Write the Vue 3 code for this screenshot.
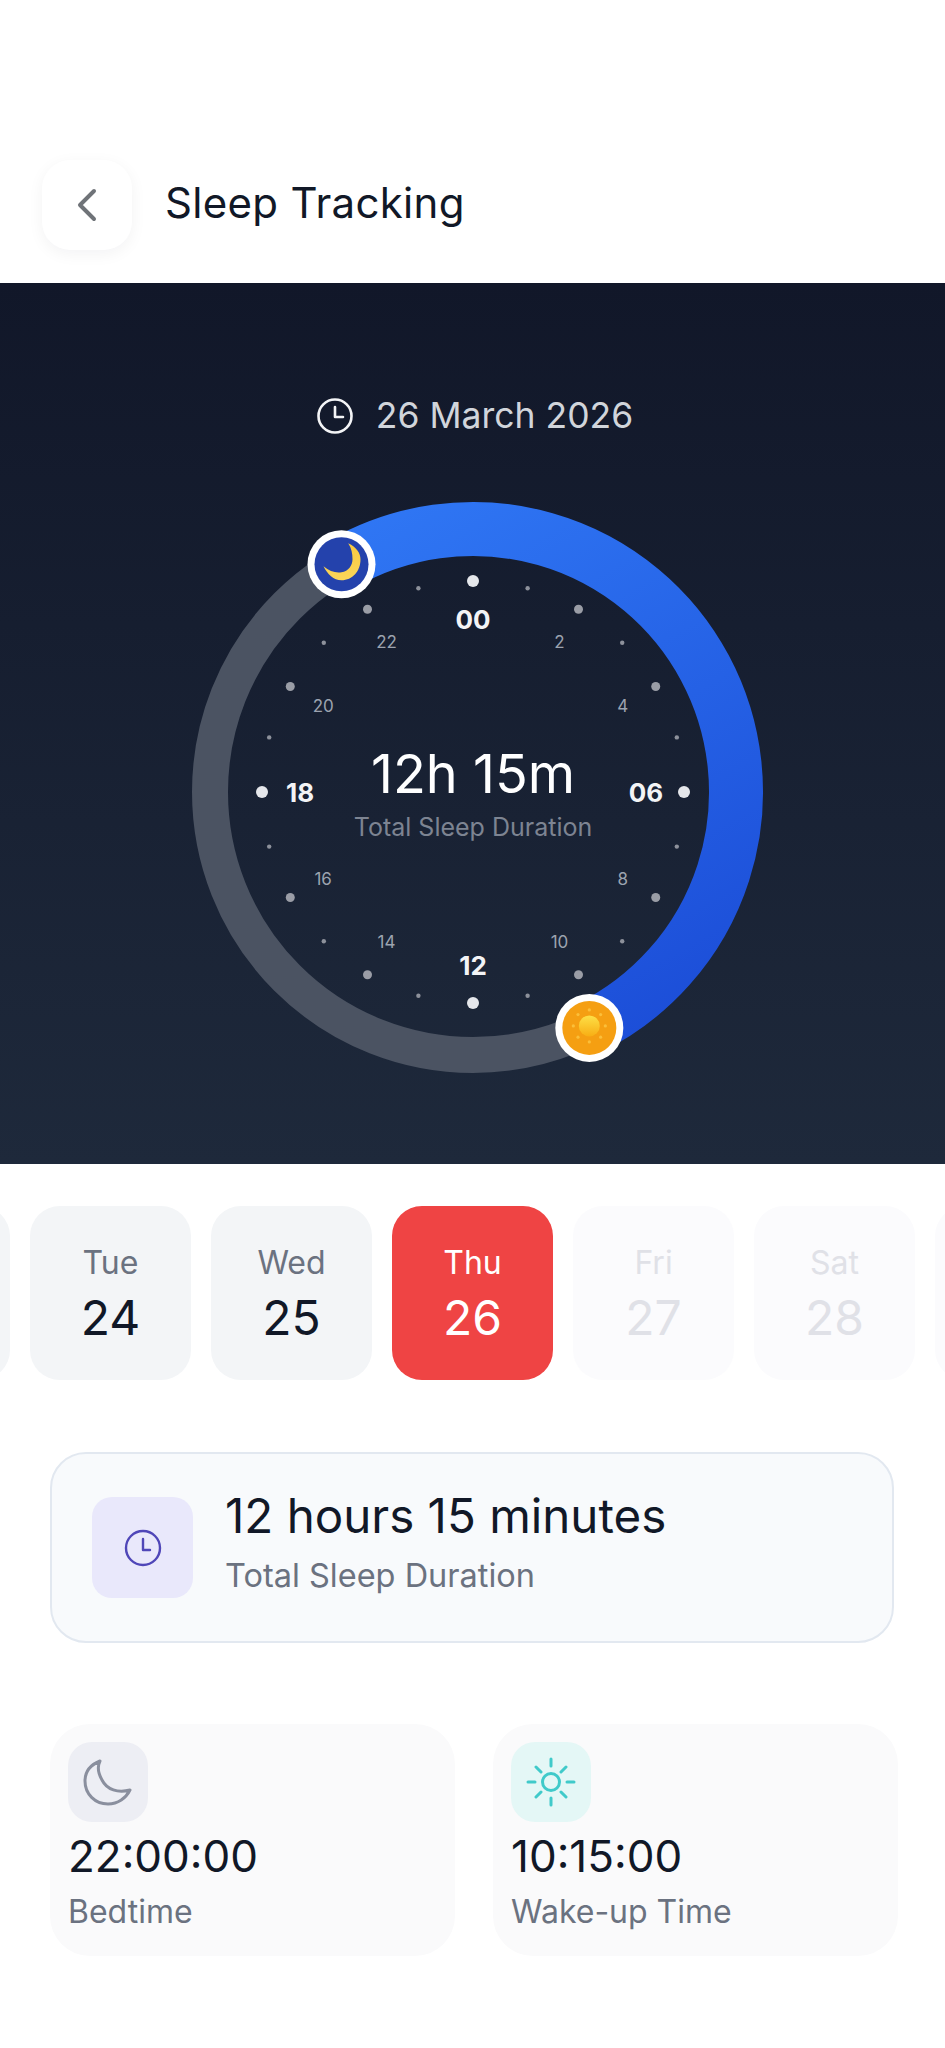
<script setup>
const cx = 473
const cy = 792
const dialR = 263

function polar(hour, r) {
  const a = (hour / 24) * Math.PI * 2
  return { x: cx + Math.sin(a) * r, y: cy - Math.cos(a) * r }
}

const startP = polar(22, dialR)
const endP = polar(10.25, dialR)
const arcPath = `M ${startP.x} ${startP.y} A ${dialR} ${dialR} 0 1 1 ${endP.x} ${endP.y}`

const dots = []
const labels = []
for (let h = 0; h < 24; h++) {
  const p = polar(h, 211)
  if (h % 6 === 0) {
    dots.push({ ...p, r: 6, fill: '#e5e7eb' })
  } else if (h % 2 === 0) {
    dots.push({ ...p, r: 4.5, fill: '#9a9da6' })
  } else {
    dots.push({ ...p, r: 2.2, fill: '#8d919b' })
  }
  if (h % 2 === 0) {
    const l = polar(h, 173)
    const main = h % 6 === 0
    let text = String(h)
    if (main) text = String(h).padStart(2, '0')
    labels.push({ ...l, text, main })
  }
}

// first and last tile only peek in at the edges, their text is off screen
const days = [
  { id: 23 },
  { id: 24, name: 'Tue', num: 24 },
  { id: 25, name: 'Wed', num: 25 },
  { id: 26, name: 'Thu', num: 26, active: true },
  { id: 27, name: 'Fri', num: 27, future: true },
  { id: 28, name: 'Sat', num: 28, future: true },
  { id: 29, future: true },
]
</script>

<template>
  <div class="page">
    <div class="header">
      <div class="back">
        <svg width="22" height="36" viewBox="0 0 22 36" fill="none">
          <path d="M18 4 L4 18 L18 32" stroke="#6f7378" stroke-width="4" stroke-linecap="round" stroke-linejoin="round" />
        </svg>
      </div>
      <div class="title">Sleep Tracking</div>
    </div>

    <div class="hero">
      <div class="date">
        <svg width="36" height="36" viewBox="0 0 36 36" fill="none" stroke="#f3f4f6" stroke-width="2.6" stroke-linecap="round" stroke-linejoin="round">
          <circle cx="18" cy="18" r="16.5" />
          <path d="M18 9 V19 H26" />
        </svg>
        <span>26 March 2026</span>
      </div>

      <svg class="dial" width="945" height="881" viewBox="0 283 945 881">
        <defs>
          <linearGradient id="arcGrad" x1="340" y1="500" x2="640" y2="1040" gradientUnits="userSpaceOnUse">
            <stop offset="0" stop-color="#3078f5" />
            <stop offset="1" stop-color="#1c4ed8" />
          </linearGradient>
          <linearGradient id="sunCore" x1="0" y1="0" x2="0" y2="1">
            <stop offset="0" stop-color="#fde047" />
            <stop offset="1" stop-color="#f8ae14" />
          </linearGradient>
          <linearGradient id="moonGrad" x1="0" y1="0" x2="0" y2="1">
            <stop offset="0" stop-color="#f9c93f" />
            <stop offset="1" stop-color="#fad65a" />
          </linearGradient>
        </defs>
        <circle :cx="cx" :cy="cy" :r="dialR" fill="none" stroke="#4b5362" stroke-width="36" />
        <path :d="arcPath" fill="none" stroke="url(#arcGrad)" stroke-width="54" />

        <circle v-for="(d, i) in dots" :key="i" :cx="d.x" :cy="d.y" :r="d.r" :fill="d.fill" />
        <text
          v-for="l in labels"
          :key="l.text"
          :x="l.x"
          :y="l.y"
          :class="l.main ? 'lab-main' : 'lab'"
          text-anchor="middle"
          dominant-baseline="central"
        >{{ l.text }}</text>

        <text class="big" x="473" y="773" text-anchor="middle" dominant-baseline="central">12h 15m</text>
        <text class="small" x="473" y="827" text-anchor="middle" dominant-baseline="central">Total Sleep Duration</text>

        <g :transform="`translate(${startP.x} ${startP.y})`">
          <circle r="34" fill="#fff" />
          <circle r="27" fill="#2442ac" />
          <path d="M6.7 -21 C 15 -17 19 -11 19 -5 C 19 7 11 16 0 16 C -8 16 -14 10 -18 2 C -12 7 -6 9 0 8 C 7 7 11 1 11 -5 C 11 -11 10 -16 6.7 -21 Z" fill="url(#moonGrad)" />
        </g>
        <g :transform="`translate(${endP.x} ${endP.y})`">
          <circle r="34" fill="#fff" />
          <circle r="27" fill="#f59f12" />
          <circle r="10.5" cy="-2" fill="url(#sunCore)" />
          <g fill="#fbbf3a">
            <circle v-for="n in 8" :key="n" :cx="Math.sin(n * Math.PI / 4) * 16" :cy="Math.cos(n * Math.PI / 4) * 16 - 2" r="1.6" />
          </g>
        </g>
      </svg>
    </div>

    <div class="days">
      <div v-for="d in days" :key="d.id" class="day" :class="{ active: d.active, future: d.future }">
        <template v-if="d.name">
          <div class="day-name">{{ d.name }}</div>
          <div class="day-num">{{ d.num }}</div>
        </template>
      </div>
    </div>

    <div class="summary">
      <div class="summary-icon">
        <svg width="38" height="38" viewBox="0 0 38 38" fill="none" stroke="#4f46b8" stroke-width="2.4" stroke-linecap="round" stroke-linejoin="round">
          <circle cx="19" cy="19" r="17" />
          <path d="M19 10 V21 H26" />
        </svg>
      </div>
      <div>
        <div class="summary-value">12 hours 15 minutes</div>
        <div class="summary-label">Total Sleep Duration</div>
      </div>
    </div>

    <div class="times">
      <div class="time-card">
        <div class="time-icon moon">
          <svg width="80" height="80" viewBox="0 0 80 80" fill="none" stroke="#8a8f9e" stroke-width="3" stroke-linejoin="round">
            <path d="M32 19 C 22 23 17 30 17 39 C 17 52 27 62 40 62 C 50 62 58 56 62 48 C 50 51 39 48 34 38 C 30 31 29 25 32 19 Z" />
          </svg>
        </div>
        <div class="time-value">22:00:00</div>
        <div class="time-label">Bedtime</div>
      </div>
      <div class="time-card">
        <div class="time-icon sun">
          <svg width="52" height="52" viewBox="0 0 52 52" fill="none" stroke="#40caca" stroke-width="3" stroke-linecap="round">
            <circle cx="26" cy="26" r="8.5" />
            <path d="M26 3 V10 M26 42 V49 M3 26 H10 M42 26 H49 M11 11 L16 16 M41 11 L36 16 M11 41 L16 36 M41 41 L36 36" />
          </svg>
        </div>
        <div class="time-value">10:15:00</div>
        <div class="time-label">Wake-up Time</div>
      </div>
    </div>
  </div>
</template>

<style scoped>
.page {
  width: 945px;
  height: 2048px;
  overflow: hidden;
  background: #fff;
  font-family: Inter, "Liberation Sans", sans-serif;
  color: #111827;
}
.header {
  height: 283px;
  box-sizing: border-box;
  padding: 160px 0 0 42px;
  display: flex;
  align-items: flex-start;
  gap: 33px;
}
.back {
  width: 90px;
  height: 90px;
  border-radius: 28px;
  background: #fff;
  display: flex;
  align-items: center;
  justify-content: center;
  box-shadow: 0 4px 16px rgba(17, 24, 39, 0.05);
}
.title {
  font-size: 42px;
  line-height: 86px;
  letter-spacing: 0.3px;
}
.hero {
  position: relative;
  height: 881px;
  background: linear-gradient(180deg, #111729, #1e293b);
}
.date {
  position: absolute;
  top: 114px;
  left: 5px;
  right: 0;
  display: flex;
  justify-content: center;
  align-items: center;
  gap: 23px;
  font-size: 35.5px;
  line-height: 38px;
  color: #d1d5db;
}
.dial {
  display: block;
}
.lab {
  font-size: 17px;
  fill: #9ca3af;
}
.lab-main {
  font-size: 26px;
  font-weight: 700;
  fill: #f3f4f6;
}
.big {
  font-size: 54px;
  fill: #fff;
}
.small {
  font-size: 25px;
  fill: #7d8492;
}
.days {
  display: flex;
  gap: 20px;
  margin: 42px 0 0 -151px;
}
.day {
  flex: 0 0 161px;
  height: 174px;
  border-radius: 30px;
  background: #f3f5f7;
  text-align: center;
  box-sizing: border-box;
  padding-top: 37px;
}
.day-name {
  font-size: 32px;
  line-height: 40px;
  color: #6b7280;
}
.day-num {
  font-size: 48px;
  line-height: 56px;
  margin-top: 7px;
  color: #111827;
}
.day.active {
  background: #ef4444;
}
.day.active .day-name,
.day.active .day-num {
  color: #fff;
}
.day.future {
  background: #fbfbfd;
}
.day.future .day-name,
.day.future .day-num {
  color: #e0e1e7;
}
.summary {
  box-sizing: border-box;
  width: 844px;
  height: 191px;
  margin: 72px 0 0 50px;
  padding: 0 40px;
  display: flex;
  align-items: center;
  gap: 32px;
  border: 2px solid #e2e8f0;
  border-radius: 36px;
  background: #f8fafc;
}
.summary-icon {
  flex: none;
  width: 101px;
  height: 101px;
  border-radius: 20px;
  background: #e9e8fb;
  display: flex;
  align-items: center;
  justify-content: center;
}
.summary-value {
  font-size: 47.5px;
  line-height: 56px;
  color: #111827;
  margin-top: -11px;
}
.summary-label {
  font-size: 32.5px;
  line-height: 40px;
  margin-top: 12px;
  color: #6b7280;
}
.times {
  display: flex;
  gap: 38px;
  margin: 81px 0 0 50px;
}
.time-card {
  box-sizing: border-box;
  width: 405px;
  height: 232px;
  padding: 18px;
  border-radius: 40px;
  background: #fafafb;
}
.time-icon {
  width: 80px;
  height: 80px;
  border-radius: 24px;
  display: flex;
  align-items: center;
  justify-content: center;
}
.time-icon.moon {
  background: #edeef4;
}
.time-icon.sun {
  background: #e4f7f6;
}
.time-value {
  font-size: 44px;
  line-height: 54px;
  margin-top: 7px;
  color: #111827;
}
.time-label {
  font-size: 32px;
  line-height: 40px;
  margin-top: 9px;
  color: #6b7280;
}
</style>
